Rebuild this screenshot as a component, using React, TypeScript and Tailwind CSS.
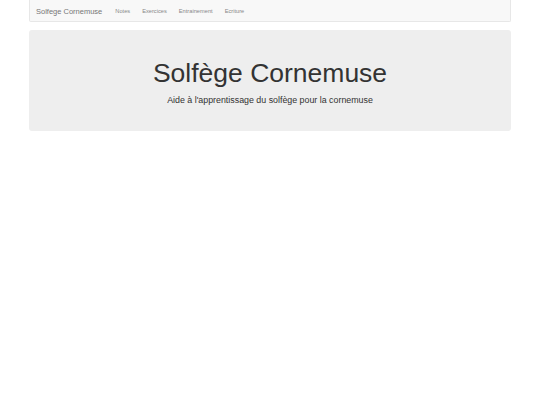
export default function App() {
  const links = ["Notes", "Exercices", "Entrainement", "Ecriture"];

  return (
    <div className="min-h-[405px] bg-white font-['Liberation_Sans',Arial,sans-serif]">
      <div className="mx-auto w-[482px]">
        {/* Navbar */}
        <nav className="flex h-[22px] items-center rounded-b-[2px] border border-t-0 border-[#e7e7e7] bg-[#f8f8f8] pt-[3px] pl-[6px]">
          <span className="text-[7.5px] leading-none text-[#777]">Solfege Cornemuse</span>
          <ul className="ml-[13px] flex items-center gap-[12px]">
            {links.map((l) => (
              <li key={l} className="text-[5.7px] leading-none text-[#888]">
                {l}
              </li>
            ))}
          </ul>
        </nav>

        {/* Jumbotron */}
        <div className="mt-[8px] rounded-[3px] bg-[#eeeeee] pt-[30px] pb-[25px] text-center">
          <h1 className="text-[26.5px] leading-[26px] text-[#333]">Solfège Cornemuse</h1>
          <p className="mt-[8px] text-[8.85px] leading-[12px] text-[#333]">
            Aide à l'apprentissage du solfège pour la cornemuse
          </p>
        </div>
      </div>
    </div>
  );
}
